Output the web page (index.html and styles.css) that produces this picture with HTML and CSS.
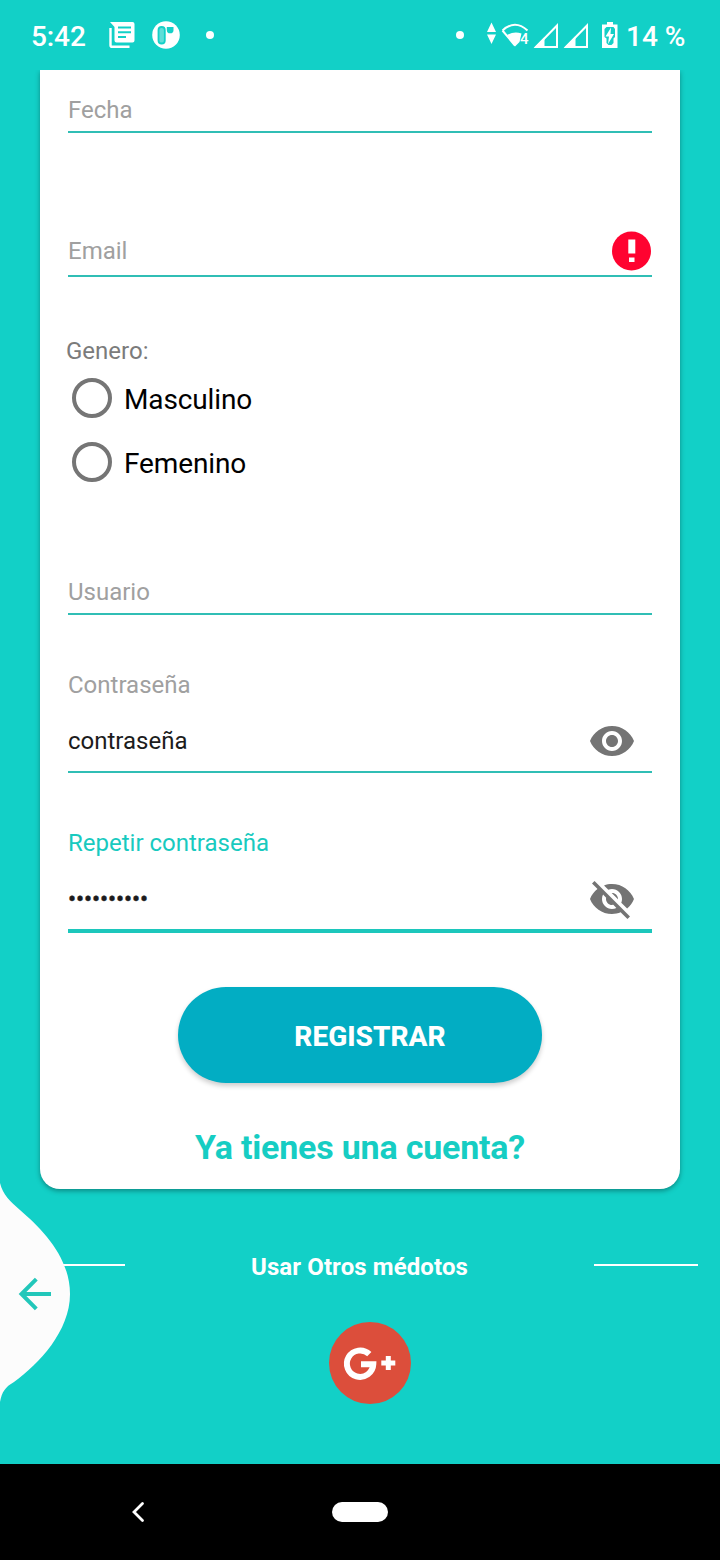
FILE: index.html
```html
<!DOCTYPE html>
<html lang="es">
<head>
<meta charset="utf-8">
<title>Registro</title>
<link rel="stylesheet" href="styles.css">
</head>
<body>
<div class="screen">
  <header class="status">
    <span class="clock">5:42</span>
    <svg class="news" width="26" height="26" viewBox="0 0 26 26">
      <path d="M1.500 6v17.200a1.600 1.600 0 0 0 1.600 1.600H20.500" fill="none" stroke="#fff" stroke-width="2.400"/>
      <path fill="#fff" fill-rule="evenodd" d="M1 0h22.500a2 2 0 0 1 2 2v16.500a2 2 0 0 1-2 2H7.500a2 2 0 0 1-2-2V5zM9 4.500v2h13v-2zm0 4.700v2h13v-2zm0 4.700v2h8v-2z"/>
    </svg>
    <svg class="app" width="28" height="28" viewBox="0 0 28 28">
      <circle cx="14" cy="14" r="13.800" fill="#fff"/>
      <rect x="6.500" y="6" width="6.300" height="16.500" rx="3.100" fill="#5fded8" stroke="#14d0c7" stroke-width="1.800"/>
      <path d="M14.800 6h6.700v3a3.300 3.300 0 0 1-6.700 0z" fill="#14d0c7"/>
    </svg>
    <i class="dot"></i>
    <svg class="signals" width="168" height="30" viewBox="450 20 168 30">
      <circle cx="460" cy="35" r="4" fill="#fff"/>
      <path d="M487 32l4.500-9.500L496 32zM487 34.500h9L491.500 44z" fill="#fff"/>
      <path d="M502.500 30.500q12.500-11.500 25 0M502.500 30.500l12.500 15" fill="none" stroke="#fff" stroke-width="2"/>
      <path d="M507 35q7-4 14.500-1.500L519.500 42 515 46.500z" fill="#fff"/>
      <path d="M536 47l21-21.500V47zM566 47l21-21.500V47z" fill="none" stroke="#fff" stroke-width="2"/>
      <path d="M534 47.500l10.500-10.500v10.500zM564 47.500l11.500-11.500v11.500z" fill="#fff"/>
      <path d="M607 22h6v2.500h4.500V48H602V24.500h5z" fill="#fff"/>
      <path d="M606.500 27h7l1.500 2v8l-1.500 1.500V43l-2 2h-3l-2-2v-4.500L604.500 37v-8z" fill="#14d0c7"/>
      <path d="M611 27.500l-5.500 9h3.500l-1 7.500 6-10h-3.500z" fill="#fff"/>
    </svg>
    <span class="sim">4</span>
    <span class="battery">14 %</span>
  </header>

  <main class="card">
    <div class="field date"><span class="hint">Fecha</span></div>
    <div class="field email">
      <span class="hint">Email</span>
      <svg class="error" width="40" height="40" viewBox="0 0 40 40">
        <circle cx="19.500" cy="20" r="19.500" fill="#ff0330"/>
        <path d="M16.300 8.500h7V22.500h-7zM17 26.500h5.500v4.500H17z" fill="#fff"/>
      </svg>
    </div>
    <div class="group">Genero:</div>
    <div class="radio"><i></i><span>Masculino</span></div>
    <div class="radio"><i></i><span>Femenino</span></div>
    <div class="field user"><span class="hint">Usuario</span></div>
    <div class="field pass">
      <span class="hint">Contraseña</span>
      <div class="value"><span>contraseña</span>
        <svg width="48" height="48" viewBox="0 0 24 24"><path d="M12 4.500C7 4.500 2.730 7.610 1 12c1.730 4.390 6 7.500 11 7.500s9.270-3.110 11-7.500c-1.730-4.390-6-7.500-11-7.500zM12 17c-2.760 0-5-2.240-5-5s2.240-5 5-5 5 2.240 5 5-2.240 5-5 5zm0-8c-1.660 0-3 1.340-3 3s1.340 3 3 3 3-1.340 3-3-1.340-3-3-3z"/></svg>
      </div>
    </div>
    <div class="field repeat">
      <span class="hint">Repetir contraseña</span>
      <div class="value"><span class="bullets">••••••••••</span>
        <svg width="48" height="48" viewBox="0 0 24 24"><path d="M12 7c2.760 0 5 2.240 5 5 0 .65-.13 1.260-.36 1.830l2.920 2.920c1.510-1.260 2.700-2.890 3.430-4.750-1.730-4.390-6-7.500-11-7.500-1.400 0-2.740.25-3.980.7l2.160 2.160C10.740 7.130 11.350 7 12 7zM2 4.270l2.280 2.280.46.46C3.080 8.300 1.780 10.020 1 12c1.730 4.390 6 7.500 11 7.500 1.550 0 3.030-.3 4.380-.84l.42.42L19.730 22 21 20.730 3.270 3 2 4.270zM7.530 9.800l1.550 1.550c-.05.21-.08.43-.08.65 0 1.660 1.340 3 3 3 .22 0 .44-.03.65-.08l1.550 1.550c-.67.33-1.410.53-2.200.53-2.760 0-5-2.240-5-5 0-.79.2-1.530.53-2.200zm4.310-.78l3.150 3.150.02-.16c0-1.660-1.340-3-3-3l-.17.01z"/></svg>
      </div>
    </div>
    <button class="register"><span>REGISTRAR</span></button>
    <a class="login">Ya tienes una cuenta?</a>
  </main>

  <section class="other">
    <div class="divider"><i></i><span>Usar Otros médotos</span><i></i></div>
    <svg class="google" width="82" height="82" viewBox="0 0 82 82">
      <circle cx="41" cy="41" r="41" fill="#dc4e3b"/>
      <path d="M40.300 32.200A13.200 13.200 0 1 0 44.300 42.200H32" fill="none" stroke="#fff" stroke-width="6"/>
      <path d="M52.300 41h14M59.300 34v14" stroke="#fff" stroke-width="5"/>
    </svg>
  </section>

  <svg class="edge" width="72" height="224" viewBox="0 0 72 224">
    <path d="M0 3C3 15 10 21 20 30C42 49 70 77 70 114C70 151 39 184 14 202C5 207 2 212 0 222z" fill="#fcfcfc"/>
    <path d="M51 114H21.500M36.300 99.200L21.500 114l14.800 14.800" fill="none" stroke="#22c7ba" stroke-width="4"/>
  </svg>

  <nav class="navbar">
    <svg class="back" width="14" height="22" viewBox="0 0 14 22"><path d="M11.500 2.500L3 11l8.500 8.500" fill="none" stroke="#fff" stroke-width="2.800" stroke-linecap="round"/></svg>
    <i class="home"></i>
  </nav>
</div>
</body>
</html>
```
FILE: styles.css
```css
* { box-sizing: border-box; }
body { margin: 0; font-family: Roboto, sans-serif; }
svg { display: block; flex: none; }
.screen {
  position: relative;
  width: 720px;
  height: 1560px;
  display: flex;
  flex-direction: column;
  background: #12d0c7;
  overflow: hidden;
}
.status {
  position: relative;
  z-index: 1;
  height: 70px;
  flex: none;
  display: flex;
  align-items: flex-start;
  padding: 20px 0 0 31px;
  background: #12d0c7;
  color: #fff;
  font-size: 28px;
  font-weight: 500;
  line-height: 32px;
}
.clock { width: 78px; padding-top: 1px; letter-spacing: -.1px; }
.news { margin-top: 2px; }
.app { margin: 1px 0 0 17px; }
.dot { width: 8px; height: 8px; margin: 11px 0 0 26px; border-radius: 50%; background: #fff; }
.signals { margin-left: 236px; }
.sim { position: absolute; left: 520px; top: 31px; font-size: 15px; line-height: 16px; }
.battery { margin-left: 8px; padding-top: 1px; white-space: nowrap; }

.card {
  width: 640px;
  height: 1119px;
  flex: none;
  margin: 0 40px;
  padding: 26px 28px 22px;
  display: flex;
  flex-direction: column;
  background: #fff;
  border-radius: 0 0 20px 20px;
  box-shadow: 0 2px 5px rgba(0, 0, 0, .34);
  font-size: 24px;
  line-height: 28px;
}
.field { border-bottom: 2px solid #30beb5; color: #1c1c1c; }
.hint { display: block; color: #a0a0a0; }
.date { padding-bottom: 7px; }
.email { display: flex; justify-content: space-between; margin-top: 104px; padding-bottom: 10px; }
.error { margin: -6px 0; }
.group { margin: 60px 0 1px -2px; color: #7b7b7b; }
.radio { display: flex; align-items: center; height: 64px; padding-left: 4px; font-size: 28px; color: #000; }
.radio i { width: 40px; height: 40px; margin-right: 12px; border: 4px solid #757575; border-radius: 50%; }
.radio span { padding-top: 4px; letter-spacing: -.12px; }
.user { margin-top: 84px; padding-bottom: 7px; }
.pass { margin-top: 56px; padding-bottom: 16px; }
.repeat { margin-top: 56px; padding-bottom: 16px; border-bottom: 4px solid #1cc7bc; }
.repeat .hint { color: #18cabf; }
.bullets { letter-spacing: -.1px; -webkit-text-stroke: .5px #1c1c1c; }
.value { display: flex; justify-content: space-between; margin-top: 28px; height: 28px; }
.value svg { margin: -10px 16px 0 0; fill: #747474; }
.register {
  flex: none;
  align-self: center;
  width: 364px;
  height: 96px;
  margin-top: 54px;
  padding: 4px 0 0 20px;
  border: 0;
  border-radius: 48px;
  background: #02adc3;
  box-shadow: 0 3px 5px rgba(0, 0, 0, .2);
  color: #fff;
  font: 800 28px/32px Roboto, sans-serif;
}
.login { align-self: center; margin-top: 45px; color: #16cdc3; font-size: 34px; font-weight: bold; line-height: 38px; letter-spacing: -.2px; white-space: nowrap; }

.other { height: 275px; flex: none; padding-top: 64px; }
.divider {
  display: flex;
  justify-content: space-between;
  padding: 0 22px 0 21px;
  color: #fff;
  font-size: 24px;
  font-weight: bold;
  line-height: 28px;
  letter-spacing: .1px;
}
.divider i { width: 104px; height: 2px; margin-top: 11px; background: #fff; }
.google { margin: 41px 0 0 329px; }
.edge { position: absolute; left: 0; top: 1180px; }

.navbar { height: 96px; flex: none; display: flex; align-items: center; padding-left: 131px; background: #000; }
.home { width: 56px; height: 20px; margin-left: 187px; border-radius: 10px; background: #fff; }
```
